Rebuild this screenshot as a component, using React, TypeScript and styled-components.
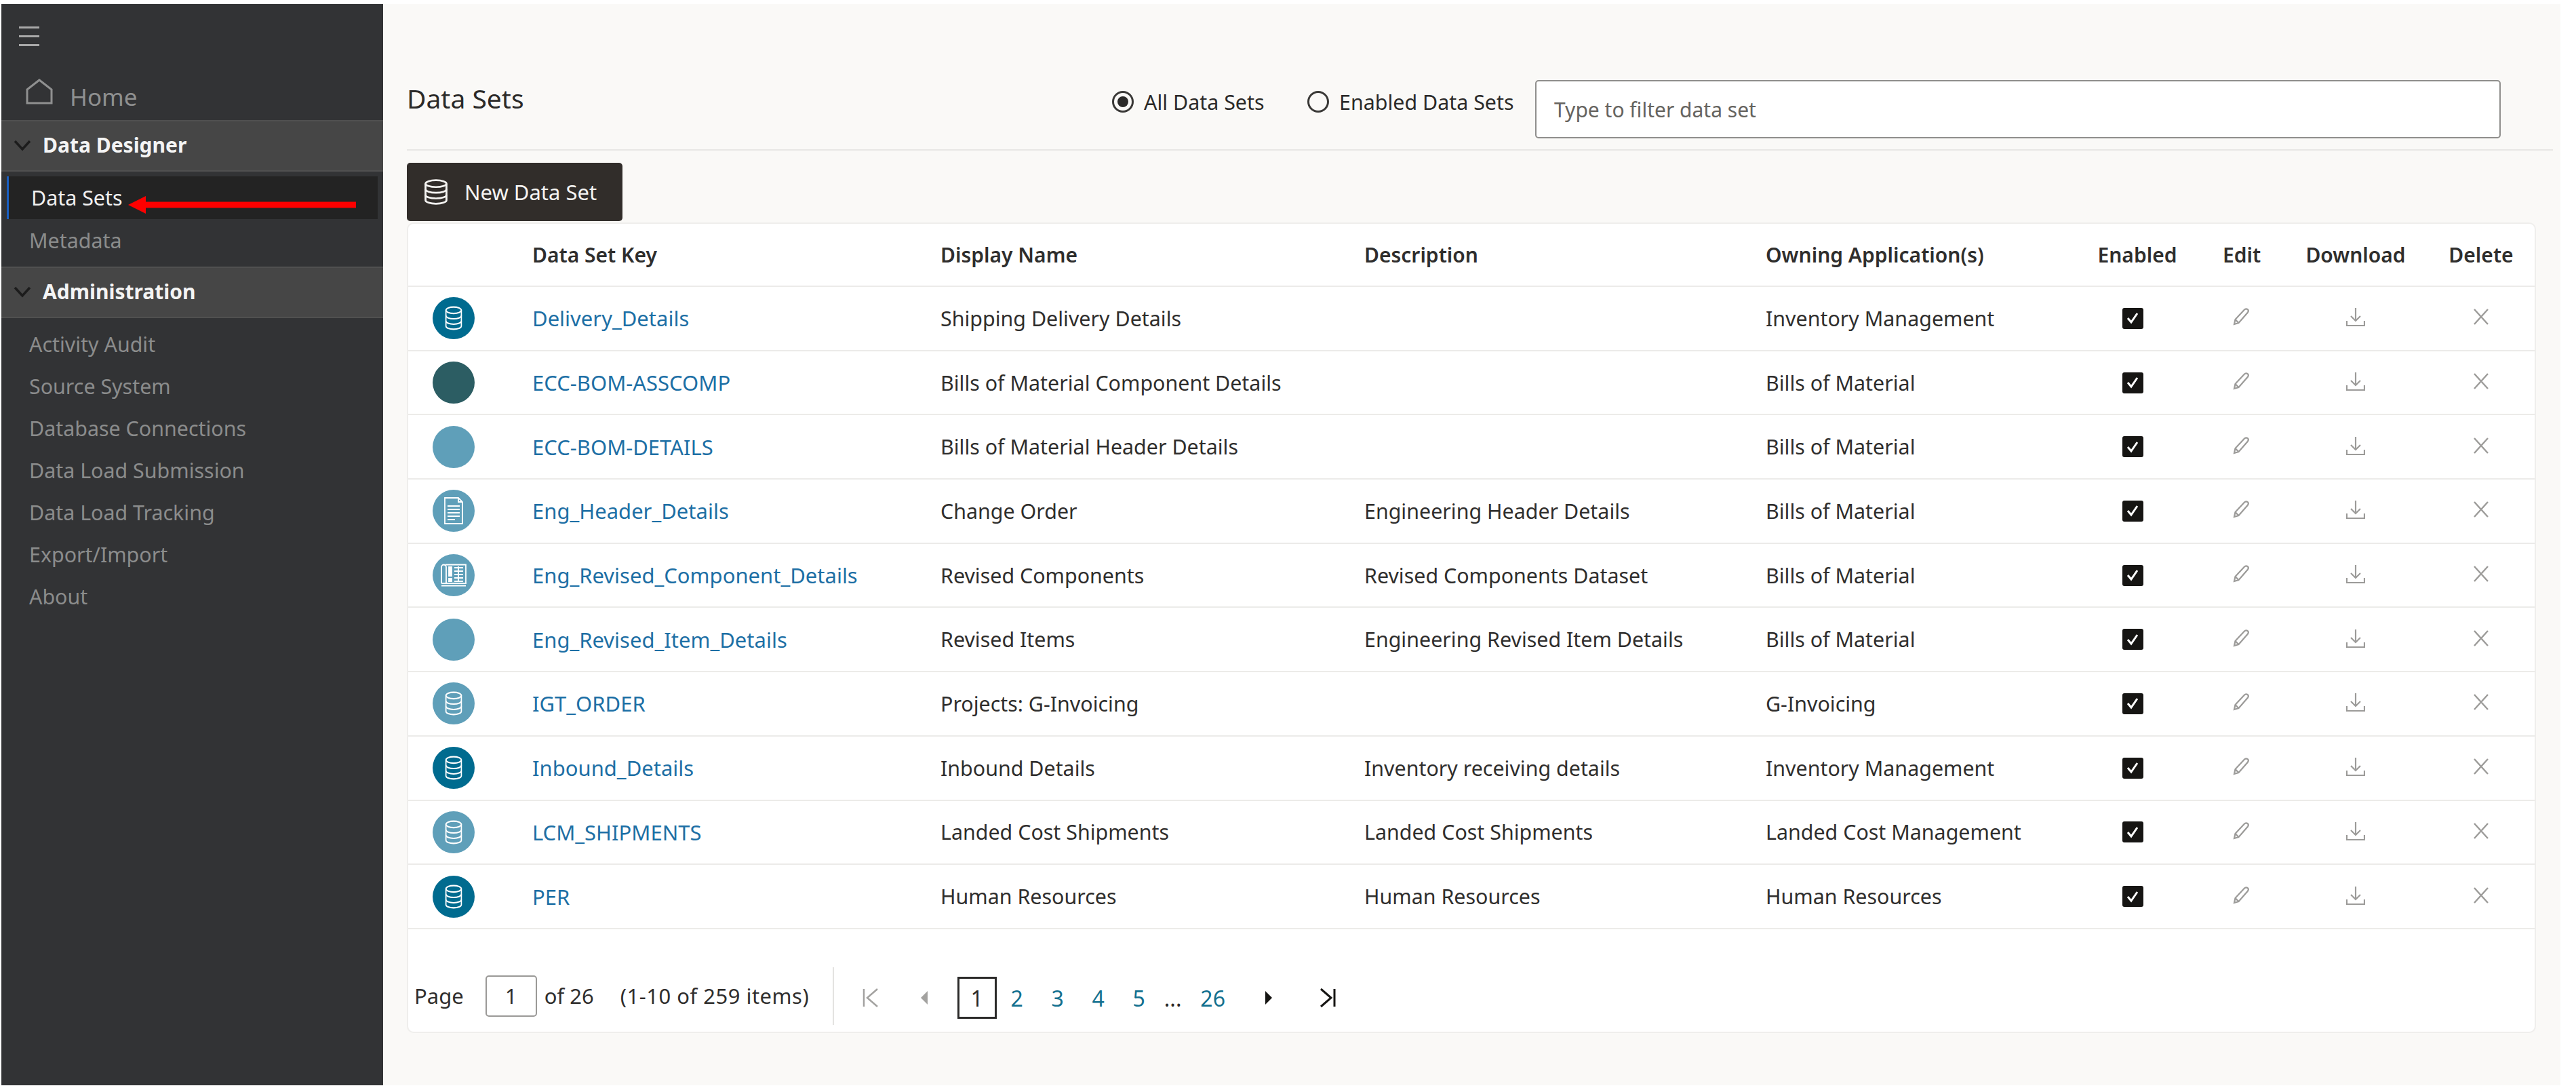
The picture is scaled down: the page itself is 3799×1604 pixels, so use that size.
import React from "react";
import styled, { createGlobalStyle } from "styled-components";

const GlobalStyle = createGlobalStyle`
  * { box-sizing: border-box; }
  html, body { margin: 0; padding: 0; background: #fff; }
  body { font-family: "Noto Sans", "Open Sans", sans-serif; }
`;

const Page = styled.div`
  display: flex;
  width: 3799px;
  height: 1604px;
  padding: 6px 23px 4px 2px;
  overflow: hidden;
`;

const Sidebar = styled.aside`
  width: 563px;
  flex-shrink: 0;
  background: #323335;
`;

const MenuButton = styled.div`
  display: flex;
  flex-direction: column;
  justify-content: space-between;
  width: 30px;
  height: 29px;
  margin: 33px 0 0 26px;
  span {
    height: 3px;
    background: #a9a9a9;
  }
`;

const HomeRow = styled.div`
  display: flex;
  align-items: flex-end;
  height: 109px;
  padding: 0 0 10px 36px;
  gap: 25px;
  svg {
    margin-bottom: 13px;
  }
`;

const HomeText = styled.span`
  color: #8f9090;
  font-size: 35px;
  line-height: 48px;
`;

const SectionHead = styled.div<{ $gapTop?: number }>`
  display: flex;
  align-items: center;
  height: 76px;
  margin-top: ${(p) => p.$gapTop ?? 0}px;
  padding: 0 0 3px 18px;
  gap: 17px;
  background: #464646;
  border-top: 2px solid #505050;
  border-bottom: 2px solid #505050;
  color: #f4f4f4;
  font-size: 30px;
  font-weight: 700;
`;

const NavList = styled.div<{ $pad: string }>`
  display: flex;
  flex-direction: column;
  padding: ${(p) => p.$pad};
`;

const NavItem = styled.div<{ $active?: boolean }>`
  position: relative;
  display: flex;
  align-items: center;
  height: ${(p) => (p.$active ? "63px" : "62px")};
  margin: ${(p) => (p.$active ? "0 8px" : "0")};
  padding-left: ${(p) => (p.$active ? "33px" : "41px")};
  background: ${(p) => (p.$active ? "#232323" : "transparent")};
  border-left: ${(p) => (p.$active ? "3px solid #1a5fc0" : "none")};
  color: ${(p) => (p.$active ? "#f0f0f0" : "#8b8c8c")};
  font-size: 30.4px;
`;

const RedArrow = styled.svg`
  position: absolute;
  left: 176px;
  top: 29px;
`;

const Main = styled.main`
  flex: 1;
  display: flex;
  flex-direction: column;
  background: #faf9f7;
  padding: 0 0 0 35px;
`;

const TopBar = styled.div`
  display: flex;
  align-items: center;
  height: 216px;
  width: 3165px;
  padding: 113px 0 17px;
  border-bottom: 2px solid #e8e7e5;
`;

const Title = styled.h1`
  margin: 0 0 34px;
  width: 1040px;
  color: #2b2a29;
  font-size: 39px;
  font-weight: 400;
`;

const RadioLabel = styled.label<{ $width: number }>`
  display: flex;
  align-items: center;
  width: ${(p) => p.$width}px;
  margin-bottom: 22px;
  gap: 15px;
  color: #2b2a29;
  font-size: 30.4px;
`;

const Radio = styled.span<{ $on?: boolean }>`
  display: flex;
  align-items: center;
  justify-content: center;
  width: 32px;
  height: 32px;
  border-radius: 50%;
  border: 3px solid #3a3937;
  &::after {
    content: "";
    display: ${(p) => (p.$on ? "block" : "none")};
    width: 16px;
    height: 16px;
    border-radius: 50%;
    background: #2b2a29;
  }
`;

const FilterInput = styled.div`
  display: flex;
  align-items: center;
  width: 1424px;
  height: 86px;
  padding-left: 26px;
  background: #fff;
  border: 2px solid #8f8e8c;
  border-radius: 5px;
  color: #66645f;
  font-size: 30px;
`;

const NewButton = styled.button`
  display: flex;
  align-items: center;
  gap: 23px;
  width: 318px;
  height: 86px;
  margin-top: 18px;
  padding: 0 0 0 24px;
  background: #312d2a;
  border: none;
  border-radius: 5px;
  color: #f5f4f2;
  font-family: inherit;
  font-size: 31px;
`;

const Card = styled.section`
  width: 3140px;
  height: 1195px;
  margin-top: 2px;
  background: #fff;
  border: 2px solid #efeeec;
  border-radius: 10px;
`;

const Row = styled.div<{ $head?: boolean }>`
  display: grid;
  grid-template-columns: 183px 602px 625px 592px 456px 184px 124px 212px 158px;
  align-items: center;
  height: ${(p) => (p.$head ? "93px" : "94.7px")};
  border-bottom: 2px solid #ecebe9;
  color: #2f2e2d;
  font-size: ${(p) => (p.$head ? "30px" : "30.4px")};
  font-weight: ${(p) => (p.$head ? 600 : 400)};
`;

const Centered = styled.div<{ $shift?: number; $lift?: number }>`
  display: flex;
  justify-content: center;
  margin-left: ${(p) => p.$shift ?? 0}px;
  margin-bottom: ${(p) => p.$lift ?? 0}px;
`;

const Cell = styled.div`
  white-space: nowrap;
`;

const KeyLink = styled.a`
  color: #1d6fa5;
  font-size: 31px;
  white-space: nowrap;
`;

const Badge = styled.div<{ $color: string }>`
  display: flex;
  align-items: center;
  justify-content: center;
  width: 62px;
  height: 62px;
  margin-left: 36px;
  border-radius: 50%;
  background: ${(p) => p.$color};
`;

const CheckBox = styled.span`
  display: flex;
  align-items: center;
  justify-content: center;
  width: 31px;
  height: 31px;
  background: #161513;
  border-radius: 3px;
`;

const Pager = styled.div`
  display: flex;
  align-items: center;
  height: 155px;
  padding: 42px 0 0 9px;
  color: #2f2e2d;
  font-size: 31px;
`;

const PageInput = styled.div`
  display: flex;
  align-items: center;
  justify-content: center;
  width: 76px;
  height: 61px;
  margin: 0 11px 0 32px;
  border: 2px solid #9a9997;
  border-radius: 5px;
`;

const Items = styled.span`
  width: 279px;
  margin-left: 39px;
  letter-spacing: 0.5px;
  white-space: nowrap;
`;

const PagerDivider = styled.span`
  width: 2px;
  height: 85px;
  margin: 0 24px 0 34px;
  background: #e4e3e1;
`;

const PageLinks = styled.div`
  display: flex;
  align-items: center;
  height: 62px;
  margin-top: 6px;
  font-size: 32px;
`;

const PageSlot = styled.span<{ $w: number; $current?: boolean; $plain?: boolean }>`
  display: flex;
  align-items: center;
  justify-content: center;
  width: ${(p) => p.$w}px;
  height: ${(p) => (p.$current ? "62px" : "auto")};
  border: ${(p) => (p.$current ? "3px solid #2b2a29" : "none")};
  color: ${(p) => (p.$current || p.$plain ? "#2b2a29" : "#13708f")};
`;

const DbIcon = ({ width = 28, height = 36, color = "#fff", sw = 2 }: { width?: number; height?: number; color?: string; sw?: number }) => (
  <svg width={width} height={height} viewBox="0 0 32 34" fill="none" stroke={color} strokeWidth={sw} preserveAspectRatio="none">
    <ellipse cx="16" cy="6" rx="13" ry="4.5" />
    <path d="M3 6v22c0 2.5 5.8 4.5 13 4.5s13-2 13-4.5V6" />
    <path d="M3 13.5c0 2.5 5.8 4.5 13 4.5s13-2 13-4.5" />
    <path d="M3 21c0 2.5 5.8 4.5 13 4.5s13-2 13-4.5" />
  </svg>
);

const DocIcon = () => (
  <svg width="30" height="42" viewBox="0 0 30 42" fill="none" stroke="#fff" strokeWidth="1.8">
    <path d="M2 2h20l6 6v32H2z" />
    <path d="M22 2v6h6" />
    <path d="M6 14h18M6 19h18M6 24h18M6 29h18M6 34h11" />
  </svg>
);

const ReportIcon = () => (
  <svg width="40" height="36" viewBox="0 0 40 36" fill="none" stroke="#fff" strokeWidth="1.8">
    <path d="M2 30V6a3.5 3.5 0 0 1 7 0v24M8 2.5h30V30H2" />
    <path d="M2 33.5h36" />
    <path d="M13 6h4v13h-4zM13 23h4v4h-4z" fill="#fff" />
    <path d="M21 7h13M21 12h13M21 17h13M21 22h13M21 27h13M27 5v23" />
  </svg>
);

const PencilIcon = () => (
  <svg width="28" height="28" viewBox="0 0 28 28" fill="none" stroke="#9c9b99" strokeWidth="2.2">
    <path d="M3 25l1.5-7L18 3.5c1.5-1.5 3-1.5 4.5-.5s1.5 3 .5 4.5L9.5 23z" />
    <path d="M4.5 18l5 5" />
  </svg>
);

const DownloadIcon = () => (
  <svg width="28" height="28" viewBox="0 0 28 28" fill="none" stroke="#9c9b99" strokeWidth="2.2">
    <path d="M14 1v18M7 13l7 7 7-7" />
    <path d="M1 20v7h26v-7" />
  </svg>
);

const CloseIcon = () => (
  <svg width="24" height="24" viewBox="0 0 24 24" fill="none" stroke="#9c9b99" strokeWidth="2.4">
    <path d="M2 1l20 22M22 1L2 23" />
  </svg>
);

const Chevron = () => (
  <svg width="26" height="18" viewBox="0 0 26 18" fill="none" stroke="#1c1c1c" strokeWidth="3.5">
    <path d="M2 3l11 12L24 3" />
  </svg>
);

type BadgeKind = "db" | "none" | "doc" | "report";

const DARK = "#006b8f";
const SLATE = "#2c5d63";
const LIGHT = "#5f9fb9";

const rows: { key: string; name: string; desc: string; owner: string; color: string; icon: BadgeKind }[] = [
  { key: "Delivery_Details", name: "Shipping Delivery Details", desc: "", owner: "Inventory Management", color: DARK, icon: "db" },
  { key: "ECC-BOM-ASSCOMP", name: "Bills of Material Component Details", desc: "", owner: "Bills of Material", color: SLATE, icon: "none" },
  { key: "ECC-BOM-DETAILS", name: "Bills of Material Header Details", desc: "", owner: "Bills of Material", color: LIGHT, icon: "none" },
  { key: "Eng_Header_Details", name: "Change Order", desc: "Engineering Header Details", owner: "Bills of Material", color: LIGHT, icon: "doc" },
  { key: "Eng_Revised_Component_Details", name: "Revised Components", desc: "Revised Components Dataset", owner: "Bills of Material", color: LIGHT, icon: "report" },
  { key: "Eng_Revised_Item_Details", name: "Revised Items", desc: "Engineering Revised Item Details", owner: "Bills of Material", color: LIGHT, icon: "none" },
  { key: "IGT_ORDER", name: "Projects: G-Invoicing", desc: "", owner: "G-Invoicing", color: LIGHT, icon: "db" },
  { key: "Inbound_Details", name: "Inbound Details", desc: "Inventory receiving details", owner: "Inventory Management", color: DARK, icon: "db" },
  { key: "LCM_SHIPMENTS", name: "Landed Cost Shipments", desc: "Landed Cost Shipments", owner: "Landed Cost Management", color: LIGHT, icon: "db" },
  { key: "PER", name: "Human Resources", desc: "Human Resources", owner: "Human Resources", color: DARK, icon: "db" },
];

const adminItems = ["Activity Audit", "Source System", "Database Connections", "Data Load Submission", "Data Load Tracking", "Export/Import", "About"];

const renderBadgeIcon = (icon: BadgeKind) => {
  if (icon === "db") return <DbIcon />;
  if (icon === "doc") return <DocIcon />;
  if (icon === "report") return <ReportIcon />;
  return null;
};

export default function App() {
  return (
    <Page>
      <GlobalStyle />
      <Sidebar>
        <MenuButton>
          <span />
          <span />
          <span />
        </MenuButton>
        <HomeRow>
          <svg width="40" height="38" viewBox="0 0 40 38" fill="none" stroke="#8f9090" strokeWidth="3">
            <path d="M2 16L20 2l18 14v20H2z" />
          </svg>
          <HomeText>Home</HomeText>
        </HomeRow>
        <SectionHead>
          <Chevron />
          Data Designer
        </SectionHead>
        <NavList $pad="7px 0 0">
          <NavItem $active>
            Data Sets
            <RedArrow width="336" height="26" viewBox="0 0 336 26">
              <path d="M0 13L26 0v8.5h310v9H26V26z" fill="#fe0000" />
            </RedArrow>
          </NavItem>
          <NavItem>Metadata</NavItem>
        </NavList>
        <SectionHead $gapTop={8}>
          <Chevron />
          Administration
        </SectionHead>
        <NavList $pad="7px 0 0">
          {adminItems.map((item) => (
            <NavItem key={item}>{item}</NavItem>
          ))}
        </NavList>
      </Sidebar>
      <Main>
        <TopBar>
          <Title>Data Sets</Title>
          <RadioLabel $width={288}>
            <Radio $on />
            All Data Sets
          </RadioLabel>
          <RadioLabel $width={336}>
            <Radio />
            Enabled Data Sets
          </RadioLabel>
          <FilterInput>Type to filter data set</FilterInput>
        </TopBar>
        <NewButton>
          <DbIcon width={38} height={38} color="#f5f4f2" sw={2.4} />
          New Data Set
        </NewButton>
        <Card>
          <Row $head>
            <div />
            <Cell>Data Set Key</Cell>
            <Cell>Display Name</Cell>
            <Cell>Description</Cell>
            <Cell>Owning Application(s)</Cell>
            <Centered>Enabled</Centered>
            <Centered>Edit</Centered>
            <Centered>Download</Centered>
            <Centered>Delete</Centered>
          </Row>
          {rows.map((row) => (
            <Row key={row.key}>
              <Badge $color={row.color}>{renderBadgeIcon(row.icon)}</Badge>
              <KeyLink>{row.key}</KeyLink>
              <Cell>{row.name}</Cell>
              <Cell>{row.desc}</Cell>
              <Cell>{row.owner}</Cell>
              <Centered $shift={-14}>
                <CheckBox>
                  <svg width="20" height="18" viewBox="0 0 20 18" fill="none" stroke="#fff" strokeWidth="3">
                    <path d="M3 9l5 6L17 2" />
                  </svg>
                </CheckBox>
              </Centered>
              <Centered $lift={4}>
                <PencilIcon />
              </Centered>
              <Centered $lift={4}>
                <DownloadIcon />
              </Centered>
              <Centered $lift={4}>
                <CloseIcon />
              </Centered>
            </Row>
          ))}
          <Pager>
            <span>Page</span>
            <PageInput>1</PageInput>
            <span>of 26</span>
            <Items>(1-10 of 259 items)</Items>
            <PagerDivider />
            <PageLinks>
              <PageSlot $w={60}>
                <svg width="26" height="30" viewBox="0 0 26 28" fill="none" stroke="#a3a2a0" strokeWidth="2.5">
                  <path d="M3 1v26M23 1L8 14l15 13" />
                </svg>
              </PageSlot>
              <PageSlot $w={98}>
                <svg width="12" height="24" viewBox="0 0 12 20">
                  <path d="M11 0L1 10l10 10z" fill="#a3a2a0" />
                </svg>
              </PageSlot>
              <PageSlot $w={58} $current>
                1
              </PageSlot>
              <PageSlot $w={60}>2</PageSlot>
              <PageSlot $w={60}>3</PageSlot>
              <PageSlot $w={60}>4</PageSlot>
              <PageSlot $w={60}>5</PageSlot>
              <PageSlot $w={40} $plain>
                ...
              </PageSlot>
              <PageSlot $w={78}>26</PageSlot>
              <PageSlot $w={86}>
                <svg width="12" height="24" viewBox="0 0 12 20">
                  <path d="M1 0l10 10L1 20z" fill="#161513" />
                </svg>
              </PageSlot>
              <PageSlot $w={88}>
                <svg width="26" height="30" viewBox="0 0 26 28" fill="none" stroke="#161513" strokeWidth="3">
                  <path d="M23 1v26M3 1l15 13L3 27" />
                </svg>
              </PageSlot>
            </PageLinks>
          </Pager>
        </Card>
      </Main>
    </Page>
  );
}
